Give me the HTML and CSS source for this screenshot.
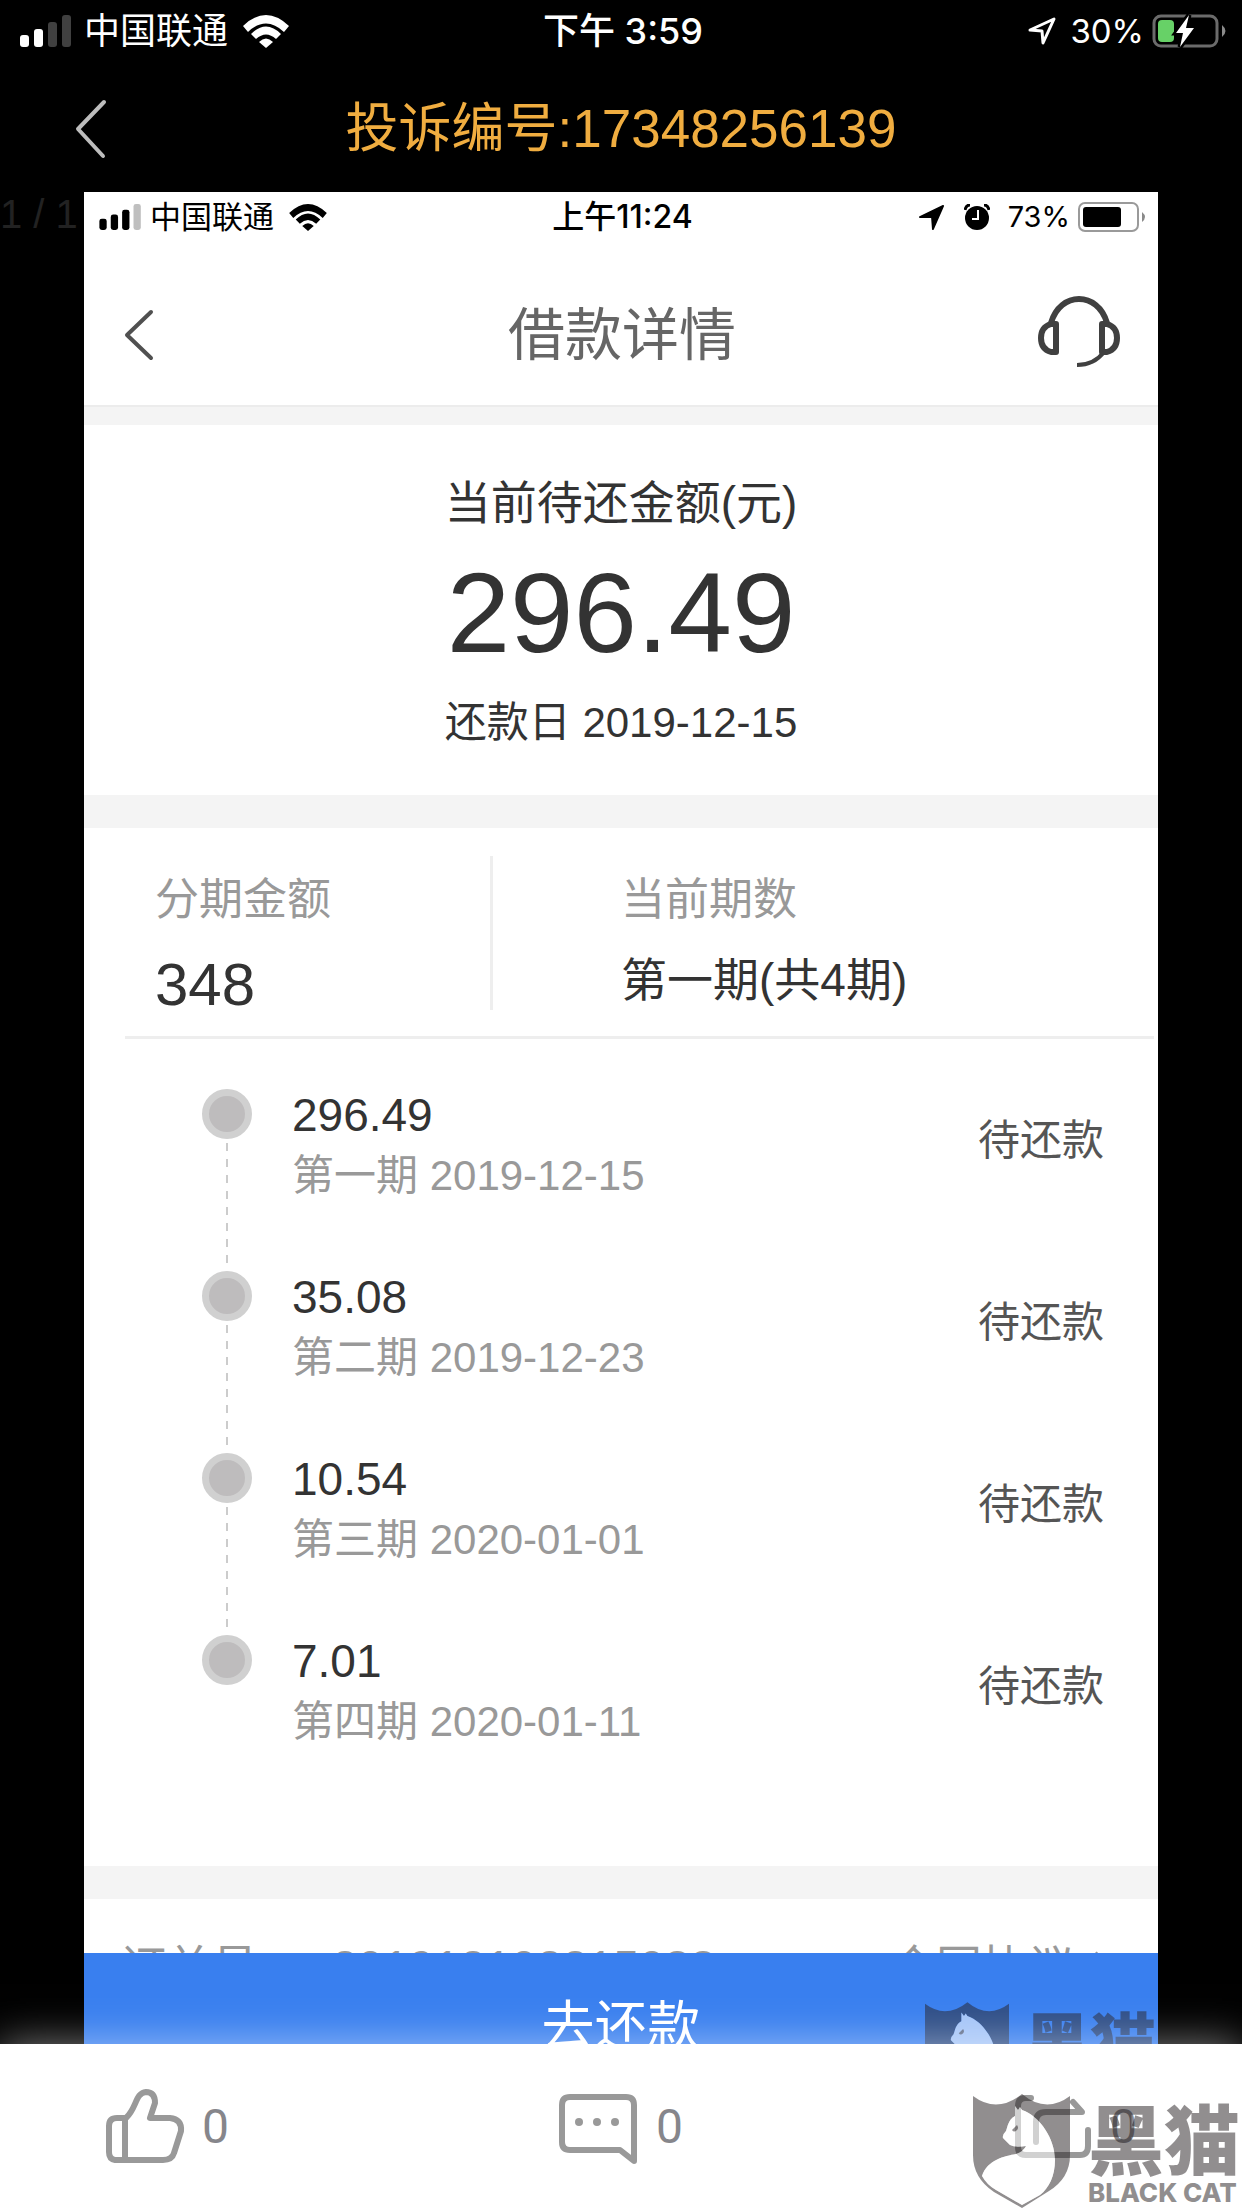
FILE: index.html
```
<!DOCTYPE html>
<html lang="zh-CN">
<head>
  <meta charset="UTF-8">
  <meta name="viewport" content="width=device-width, initial-scale=1.0">
  <title>投诉编号:17348256139</title>
  <link rel="stylesheet" href="styles.css">
</head>

<body>
  <!-- shared shapes -->
  <svg class="defs" width="0" height="0" aria-hidden="true">
    <symbol id="wifi" viewBox="0 0 46 33">
      <path d="M0 11 Q23 -11 46 11 L41 17 Q23 0 5 17 Z"/>
      <path d="M8 19 Q23 4 38 19 L33 24 Q23 15 13 24 Z"/>
      <path d="M16 27 Q23 20 30 27 L23 33 Z"/>
    </symbol>
    <symbol id="shield" viewBox="0 0 97 114">
      <path class="shield-body" fill-rule="evenodd" d="M0 2 Q24 20 49 0 Q73 20 97 2 V61 Q97 84 76 97 L49 114 L21 98 Q0 84 0 61 Z
        M42 12 L45 16 L47 13 L49 16 C67 22 82 45 82 66 C82 82 76 94 67 101 L49 111 L23 96 Q14 91 9 82 C14 66 32 62 43 60 Q51 57 53 52 Q43 54 37 51 L30 44 Q29 41 33 37 C35 32 35 26 42 22 Z"/>
      <path class="shield-cat" d="M42 12 L45 16 L47 13 L49 16 C67 22 82 45 82 66 C82 82 76 94 67 101 L49 111 L23 96 Q14 91 9 82 C14 66 32 62 43 60 Q51 57 53 52 Q43 54 37 51 L30 44 Q29 41 33 37 C35 32 35 26 42 22 Z"/>
      <path class="shield-eye" d="M39 36 L44 31 Q46 34 44 36 Q41 39 39 36 Z"/>
    </symbol>
  </svg>

  <div class="status">
    <div class="status-left">
      <svg class="signal" viewBox="0 0 52 32">
        <rect x="0" y="20" width="9" height="12" rx="3"/>
        <rect x="14" y="14" width="9" height="18" rx="3"/>
        <rect class="off" x="28" y="7" width="9" height="25" rx="3"/>
        <rect class="off" x="42" y="0" width="9" height="32" rx="3"/>
      </svg>
      <span class="carrier">中国联通</span>
      <svg class="wifi"><use href="#wifi"/></svg>
    </div>
    <div class="status-time">下午 3:59</div>
    <div class="status-right">
      <svg class="arrow" viewBox="0 0 28 28"><path d="M2 13 L26 2 L15 26 L14 14 Z" fill="none" stroke="#fff" stroke-width="3" stroke-linejoin="round"/></svg>
      <span class="percent">30%</span>
      <svg class="battery" viewBox="0 0 74 34">
        <rect x="2" y="2" width="63" height="30" rx="7" fill="none" stroke="#6b6b6b" stroke-width="3"/>
        <path d="M70 11 Q77 17 70 23 Z" fill="#8a8a8a"/>
        <rect x="6" y="6" width="16" height="22" rx="4" fill="#67d167"/>
        <path d="M37 1 L24 19 H31 L28 33 L42 14 H34 Z" fill="#fff" stroke="#000" stroke-width="5" paint-order="stroke"/>
      </svg>
    </div>
  </div>

  <header class="topbar">
    <button class="back" type="button" aria-label="返回">
      <svg viewBox="0 0 32 60"><path d="M29 3 L3 30 L28 57" fill="none" stroke="#bdbdbd" stroke-width="4" stroke-linecap="round" stroke-linejoin="round"/></svg>
    </button>
    <h1>投诉编号:17348256139</h1>
  </header>

  <main class="viewer">
    <span class="counter">1 / 1</span>

    <div class="shot">
      <div class="status status-small">
        <div class="status-left">
          <svg class="signal" viewBox="0 0 52 32">
            <rect x="0" y="18" width="9" height="14" rx="3"/>
            <rect x="14" y="13" width="9" height="19" rx="3"/>
            <rect x="28" y="7" width="9" height="25" rx="3"/>
            <rect class="off" x="42" y="0" width="9" height="32" rx="3"/>
          </svg>
          <span class="carrier">中国联通</span>
          <svg class="wifi"><use href="#wifi"/></svg>
        </div>
        <div class="status-time">上午11:24</div>
        <div class="status-right">
          <svg class="arrow" viewBox="0 0 28 28"><path d="M1 14 L26 2 L15 27 L14 14 Z" stroke="#000" stroke-width="2" stroke-linejoin="round"/></svg>
          <svg class="alarm" viewBox="0 0 26 26">
            <circle cx="13" cy="14" r="12"/>
            <path d="M1 6 Q2 1 6 1 M25 6 Q24 1 20 1" fill="none" stroke="#000" stroke-width="3"/>
            <path d="M14 6 V15 H8" fill="none" stroke="#fff" stroke-width="2"/>
          </svg>
          <span class="percent">73%</span>
          <svg class="battery" viewBox="0 0 68 30">
            <rect x="1" y="1" width="59" height="28" rx="6" fill="none" stroke="#9a9a9a" stroke-width="2"/>
            <path d="M64 10 Q70 15 64 20 Z" fill="#8a8a8a"/>
            <rect x="5" y="5" width="38" height="20" rx="3"/>
          </svg>
        </div>
      </div>

      <div class="loan-header">
        <button class="back" type="button" aria-label="返回">
          <svg viewBox="0 0 30 52"><path d="M27 3 L3 26 L27 49" fill="none" stroke="#505050" stroke-width="4" stroke-linecap="round" stroke-linejoin="round"/></svg>
        </button>
        <h2>借款详情</h2>
        <button class="service" type="button" aria-label="客服">
          <svg viewBox="0 0 82 78" fill="none" stroke="#404040" stroke-width="6">
            <path d="M13 27 C22 -5 60 -5 69 27"/>
            <path d="M18 28 V56 H13 Q3 53 3 42 Q3 31 13 28 Z" stroke-linejoin="round"/>
            <path d="M64 28 V56 H69 Q79 53 79 42 Q79 31 69 28 Z" stroke-linejoin="round"/>
            <path d="M66 56 Q56 69 39 69" stroke-width="4"/>
          </svg>
        </button>
      </div>

      <section class="due">
        <p class="due-label">当前待还金额(元)</p>
        <p class="due-amount">296.49</p>
        <p class="due-date">还款日 2019-12-15</p>
      </section>

      <section class="plan">
        <div class="plan-head">
          <div class="plan-col">
            <p class="plan-label">分期金额</p>
            <p class="plan-total">348</p>
          </div>
          <div class="plan-col">
            <p class="plan-label">当前期数</p>
            <p class="plan-term">第一期(共4期)</p>
          </div>
        </div>

        <ol class="terms">
          <li>
            <div class="track"><i class="dot"></i><i class="dash"></i></div>
            <div class="term">
              <p class="term-amount">296.49</p>
              <p class="term-date">第一期 2019-12-15</p>
            </div>
            <span class="term-state">待还款</span>
          </li>
          <li>
            <div class="track"><i class="dot"></i><i class="dash"></i></div>
            <div class="term">
              <p class="term-amount">35.08</p>
              <p class="term-date">第二期 2019-12-23</p>
            </div>
            <span class="term-state">待还款</span>
          </li>
          <li>
            <div class="track"><i class="dot"></i><i class="dash"></i></div>
            <div class="term">
              <p class="term-amount">10.54</p>
              <p class="term-date">第三期 2020-01-01</p>
            </div>
            <span class="term-state">待还款</span>
          </li>
          <li>
            <div class="track"><i class="dot"></i></div>
            <div class="term">
              <p class="term-amount">7.01</p>
              <p class="term-date">第四期 2020-01-11</p>
            </div>
            <span class="term-state">待还款</span>
          </li>
        </ol>
      </section>

      <section class="order">
        <span>订单号</span>
        <span class="order-no">201912102215088</span>
        <a href="#">合同协议 <svg class="more" viewBox="0 0 16 42"><path d="M2 6 L14 21 L2 36" fill="none" stroke="#999" stroke-width="2"/></svg></a>
      </section>

      <button class="pay" type="button">去还款</button>

      <div class="watermark watermark-shot">
        <svg><use href="#shield"/></svg>
        <div class="brand"><b>黑猫</b></div>
      </div>
    </div>
  </main>

  <footer class="actions">
    <button type="button" aria-label="点赞">
      <svg viewBox="0 0 80 76" fill="none" stroke="#999" stroke-width="6" stroke-linejoin="round">
        <path d="M21 30 C32 20 30 5 41 4 Q50 4 50 15 L45 30 H65 Q77 31 76 43 L69 65 Q67 72 58 72 H10 Q4 71 4 64 V38 Q4 30 12 30 Z"/>
        <path d="M20 30 V72"/>
      </svg>
      <span>0</span>
    </button>
    <button type="button" aria-label="评论">
      <svg viewBox="0 0 80 76" fill="none" stroke="#999" stroke-width="6" stroke-linejoin="round">
        <path d="M11 9 H67 Q75 9 75 17 V73 L61 62 H11 Q3 62 3 54 V17 Q3 9 11 9 Z"/>
        <g fill="#999" stroke="none">
          <circle cx="20" cy="34" r="4"/><circle cx="38" cy="34" r="4"/><circle cx="56" cy="34" r="4"/>
        </g>
      </svg>
      <span>0</span>
    </button>
    <button type="button" aria-label="转发">
      <svg viewBox="0 0 80 76" fill="none" stroke="#999" stroke-width="6" stroke-linecap="round" stroke-linejoin="round">
        <path d="M18 10 H13 Q5 10 5 18 V59 Q5 67 13 67 H67 Q75 67 75 58 V42"/>
        <path d="M23 54 V34 Q23 24 33 24 H69 L60 14"/>
      </svg>
      <span>0</span>
    </button>

    <div class="watermark">
      <svg><use href="#shield"/></svg>
      <div class="brand"><b>黑猫</b><small>BLACK CAT</small></div>
    </div>
  </footer>
</body>
</html>
```
FILE: styles.css
```
* {
  box-sizing: border-box;
}

body {
  display: flex;
  flex-direction: column;
  height: 100vh;
  margin: 0;
  background: #000;
  color: #333;
  font-family: "Liberation Sans", "Noto Sans CJK SC", sans-serif;
}

h1, h2, p, ol {
  margin: 0;
  padding: 0;
  font-weight: normal;
}

button {
  padding: 0;
  border: 0;
  background: none;
  font: inherit;
  cursor: pointer;
}

svg {
  display: block;
  flex: none;
}

.defs {
  position: absolute;
}

/* Phone status bars */
.status {
  display: grid;
  grid-template-columns: 1fr auto 1fr;
  align-items: center;
  flex: none;
  height: 62px;
  padding: 0 16px 0 20px;
  color: #fff;
  fill: #fff;
  font-family: Inter, "Noto Sans CJK SC", sans-serif;
  font-size: 36px;
  line-height: 62px;
}

.status-left, .status-right {
  display: flex;
  align-items: center;
}

.status-right {
  justify-content: flex-end;
}

.status-time {
  font-weight: 500;
}

.signal {
  width: 52px;
  height: 32px;
}

.signal .off {
  opacity: 0.25;
}

.carrier {
  margin: 0 15px 0 12px;
}

.wifi {
  width: 46px;
  height: 33px;
}

.arrow {
  width: 28px;
  height: 28px;
}

.percent {
  margin: 0 8px 0 14px;
  font-size: 33px;
}

.battery {
  width: 74px;
  height: 34px;
}

.status-small {
  height: 50px;
  padding: 0 12px 0 15px;
  color: #000;
  fill: #000;
  font-size: 32px;
  line-height: 50px;
}

.status-small .signal {
  width: 43px;
  height: 26px;
}

.status-small .carrier {
  margin: 0 15px 0 8px;
  font-size: 31px;
}

.status-small .wifi {
  width: 38px;
  height: 27px;
}

.status-small .arrow {
  width: 26px;
  height: 26px;
  margin-right: 19px;
}

.alarm {
  width: 26px;
  height: 26px;
}

.status-small .percent {
  margin-left: 18px;
  font-size: 29px;
}

.status-small .battery {
  width: 68px;
  height: 30px;
}

/* Complaint title */
.topbar {
  display: grid;
  grid-template-columns: 1fr auto 1fr;
  align-items: center;
  flex: none;
  height: 130px;
  padding: 4px 75px 0;
}

.topbar h1 {
  color: #f0ad40;
  font-size: 53px;
  line-height: 80px;
}

.topbar .back svg {
  width: 32px;
  height: 60px;
}

.viewer {
  position: relative;
  flex: 1;
  min-height: 0;
  padding: 0 84px;
  overflow: hidden;
}

.counter {
  position: absolute;
  top: 0;
  left: 0;
  color: #222;
  font-size: 40px;
  line-height: 44px;
  white-space: nowrap;
}

/* Loan detail page */
.shot {
  position: relative;
  background: #fff;
}

.loan-header {
  display: grid;
  grid-template-columns: 1fr auto 1fr;
  align-items: center;
  height: 165px;
  padding: 22px 38px 0 40px;
  border-bottom: 2px solid #ececec;
}

.loan-header h2 {
  color: #666;
  font-size: 57px;
  line-height: 80px;
}

.loan-header .back svg {
  width: 30px;
  height: 52px;
}

.service {
  justify-self: end;
}

.service svg {
  width: 82px;
  height: 78px;
}

.due {
  padding: 48px 0 42px;
  border-top: 18px solid #f4f4f4;
  text-align: center;
}

.due-label {
  font-size: 46px;
  line-height: 60px;
}

.due-amount {
  margin: 20px 0;
  font-size: 114px;
  line-height: 120px;
}

.due-date {
  font-size: 42px;
  line-height: 60px;
}

.plan {
  border-top: 33px solid #f4f4f4;
  border-bottom: 33px solid #f4f4f4;
}

.plan-head {
  display: flex;
  height: 211px;
  margin: 0 4px 0 41px;
  padding: 28px 0 26px;
  border-bottom: 3px solid #eee;
}

.plan-col {
  flex: 1;
  padding: 14px 0 0 128px;
}

.plan-col:first-child {
  flex: 0 0 368px;
  padding-left: 30px;
  border-right: 3px solid #eee;
}

.plan-label {
  color: #999;
  font-size: 44px;
  line-height: 60px;
}

.plan-total, .plan-term {
  margin-top: 20px;
  line-height: 60px;
}

.plan-total {
  font-size: 60px;
  line-height: 70px;
}

.plan-term {
  font-size: 46px;
}

/* Repayment timeline */
.terms {
  padding: 50px 54px 49px 118px;
  list-style: none;
}

.terms li {
  display: flex;
  gap: 40px;
  height: 182px;
}

.track {
  display: flex;
  flex-direction: column;
  align-items: center;
  gap: 4px;
}

.dot {
  width: 50px;
  height: 50px;
  border: 7px solid #d0d0d0;
  border-radius: 50%;
  background: #bebcbd;
}

.dash {
  flex: 1;
  width: 2px;
  margin-bottom: 4px;
  background: repeating-linear-gradient(#ccc 0 8px, transparent 8px 16px);
}

.term {
  flex: 1;
}

.term-amount {
  font-size: 46px;
  line-height: 52px;
}

.term-date {
  margin-top: 5px;
  color: #999;
  font-size: 42px;
  line-height: 60px;
}

.term-state {
  color: #555;
  font-size: 42px;
  line-height: 104px;
}

/* The row is cut off by the pay button */
.order {
  display: flex;
  height: 54px;
  padding: 38px 48px 0 36px;
  overflow: hidden;
  color: #999;
  font-size: 46px;
  line-height: 60px;
}

.order-no {
  flex: 1;
  margin-left: 74px;
}

.order a {
  display: flex;
  align-items: center;
  gap: 20px;
  height: 60px;
  color: inherit;
  text-decoration: none;
}

.more {
  width: 16px;
  height: 42px;
}

.pay {
  display: block;
  width: 100%;
  height: 138px;
  background: #397fef;
  color: #fff;
  font-size: 53px;
}

/* Bottom actions */
.actions {
  position: relative;
  display: flex;
  align-items: center;
  justify-content: space-between;
  flex: none;
  height: 164px;
  padding: 0 105px;
  background: #fff;
  box-shadow: 0 0 40px rgba(255, 255, 255, 0.5);
}

.actions button {
  display: flex;
  align-items: center;
  gap: 17px;
  color: #86868b;
  font-family: Roboto, sans-serif;
  font-size: 48px;
}

.actions button svg {
  width: 80px;
  height: 76px;
}

/* Black cat stamp */
.watermark {
  position: absolute;
  right: 2px;
  bottom: 0;
  display: flex;
  gap: 18px;
  color: rgba(35, 30, 32, 0.5);
  pointer-events: none;
}

.watermark svg {
  width: 97px;
  height: 114px;
}

.shield-body, .shield-eye {
  fill: rgba(35, 30, 32, 0.5);
}

.shield-cat {
  fill: rgba(255, 255, 255, 0.55);
}

.brand {
  display: flex;
  flex-direction: column;
}

.brand b {
  font-family: "Noto Sans CJK SC", sans-serif;
  font-size: 76px;
  font-weight: 900;
  line-height: 84px;
}

.brand small {
  font-family: Inter, sans-serif;
  font-size: 26px;
  font-weight: 800;
  line-height: 30px;
}

.watermark-shot {
  bottom: -10px;
  gap: 15px;
}

.watermark-shot svg {
  width: 84px;
  height: 99px;
}

.watermark-shot b {
  font-size: 66px;
  line-height: 74px;
}
```
